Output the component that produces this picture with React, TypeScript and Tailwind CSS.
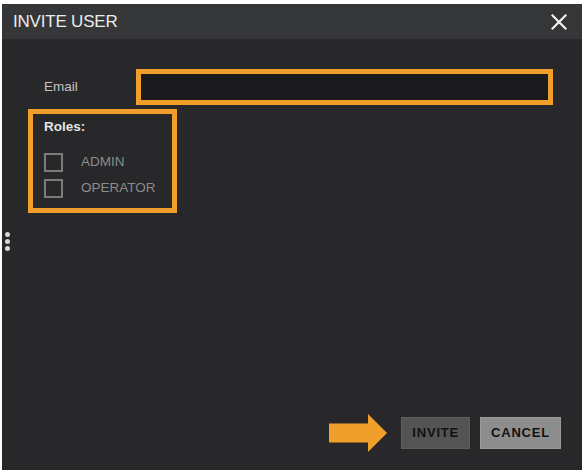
import React, { useState } from 'react';

const ROLES = ['ADMIN', 'OPERATOR'];

const CloseIcon: React.FC = () => (
  <svg width="16" height="16" viewBox="0 0 16 16" fill="none">
    <path d="M1.5 1.5 L14.5 14.5 M14.5 1.5 L1.5 14.5" stroke="#f2f2f2" strokeWidth="2.2" strokeLinecap="square" />
  </svg>
);

const ArrowIcon: React.FC = () => (
  <svg width="58" height="38" viewBox="0 0 58 38">
    <path d="M0 9.5 H39 V0 L58 19 L39 38 V28.5 H0 Z" fill="#f0a02a" />
  </svg>
);

const App: React.FC = () => {
  const [email, setEmail] = useState('');
  const [roles, setRoles] = useState<Set<string>>(new Set());

  const toggleRole = (role: string) => {
    setRoles(prev => {
      const next = new Set(prev);
      if (next.has(role)) next.delete(role);
      else next.add(role);
      return next;
    });
  };

  return (
    <div className="w-[585px] h-[474px] bg-white pt-[4px] pl-[2px] font-['Liberation_Sans',Arial,sans-serif]">
      <div className="w-[580px] h-[466px] flex flex-col bg-[#28282a]">
        {/* header */}
        <div className="h-[35px] flex items-center justify-between bg-[#353637] pl-[11px] pr-[15px]">
          <span className="text-[17px] text-[#ececec] tracking-[-0.2px]">INVITE USER</span>
          <button className="flex items-center">
            <CloseIcon />
          </button>
        </div>

        <div className="relative flex-1 flex flex-col">
          {/* drag handle */}
          <div className="absolute left-[3px] top-[193px] flex flex-col gap-[2px]">
            <span className="w-[5px] h-[5px] rounded-full bg-[#d6d6d6]" />
            <span className="w-[5px] h-[5px] rounded-full bg-[#d6d6d6]" />
            <span className="w-[5px] h-[5px] rounded-full bg-[#d6d6d6]" />
          </div>

          {/* email row */}
          <div className="flex items-center mt-[30px] pl-[42px]">
            <label className="w-[92px] text-[13.5px] text-[#c4c4c4]">Email</label>
            <input
              value={email}
              onChange={e => setEmail(e.target.value)}
              className="w-[417px] h-[36px] border-[5px] border-[#f0a02a] bg-[#1b1b1d] text-[13px] text-[#ddd] px-2 outline-none"
            />
          </div>

          {/* roles */}
          <div className="ml-[26px] mt-[4px] w-[149px] h-[104px] border-[5px] border-[#f0a02a] pl-[11px] pt-[5px]">
            <div className="text-[13.5px] leading-[16px] font-bold text-[#e4e4e4]">Roles:</div>
            <div className="mt-[14px] flex flex-col">
              {ROLES.map(role => (
                <label key={role} className="h-[26px] flex items-center cursor-pointer">
                  <span
                    onClick={() => toggleRole(role)}
                    className="w-[19px] h-[19px] border-2 border-[#7c7c7c] flex items-center justify-center"
                  >
                    {roles.has(role) && <span className="w-[9px] h-[9px] bg-[#bbb]" />}
                  </span>
                  <span className="ml-[18px] text-[13.5px] text-[#8c8c8c]">{role}</span>
                </label>
              ))}
            </div>
          </div>

          <div className="flex-1" />

          {/* footer */}
          <div className="flex items-center justify-end pr-[21px] pb-[18px]">
            <ArrowIcon />
            <button className="ml-[14px] h-[32px] px-[10px] bg-[#545454] border border-[#5e5e5e] text-[13px] font-bold tracking-[0.8px] text-[#111]">
              INVITE
            </button>
            <button className="ml-[10px] h-[32px] px-[10px] bg-[#8d8d8d] border border-[#999] text-[13px] font-bold tracking-[0.8px] text-[#111]">
              CANCEL
            </button>
          </div>
        </div>
      </div>
    </div>
  );
};

export default App;
